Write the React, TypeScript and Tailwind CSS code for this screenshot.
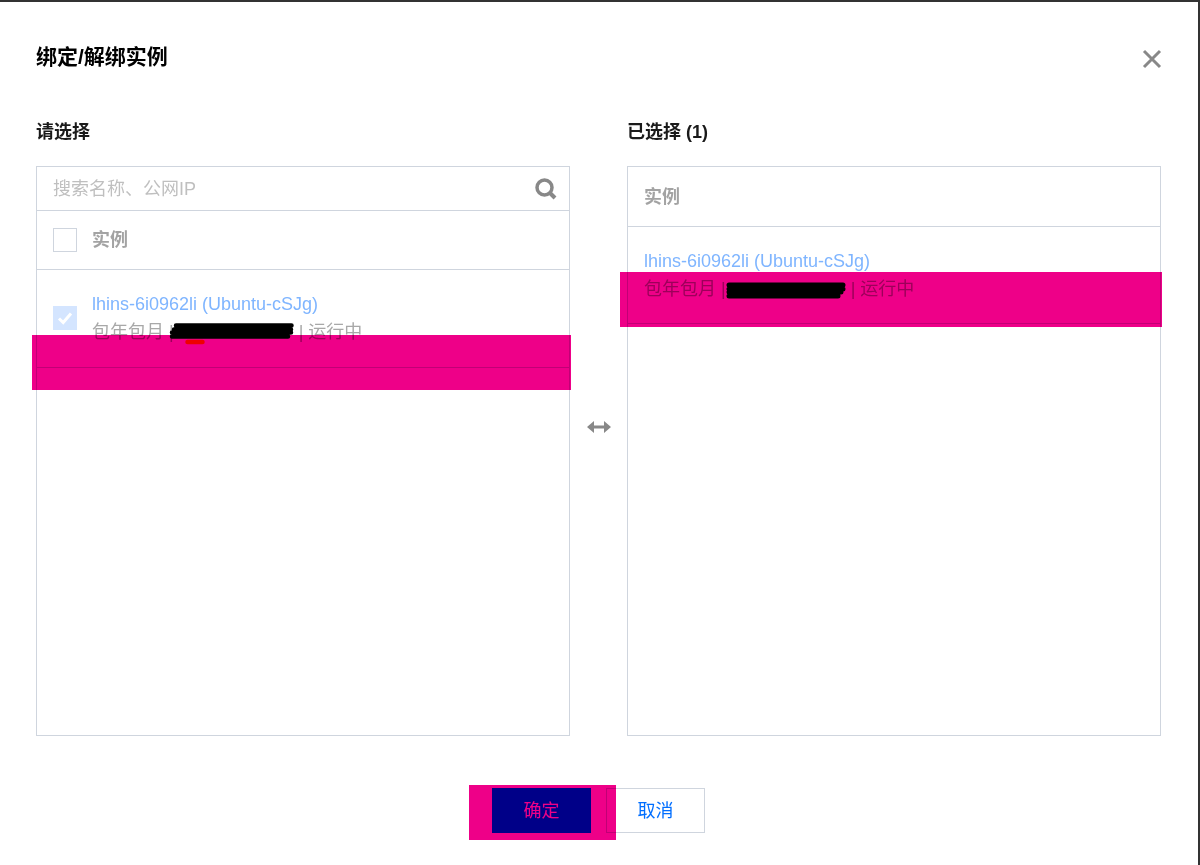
import React from "react";

const fontStack = "font-['Liberation_Sans','Noto_Sans_CJK_SC',sans-serif]";

const CheckBox = ({ checked }: { checked?: boolean }) =>
    checked ? (
        <span className="mb-[2px] flex h-6 w-6 shrink-0 items-center justify-center bg-[#d4e5ff]">
            <svg width="16" height="14" viewBox="0 0 16 14" fill="none">
                <path d="M2 7.5L6.2 11.5L14 2.5" stroke="#ffffff" strokeWidth="3" />
            </svg>
        </span>
    ) : (
        <span className="h-6 w-6 shrink-0 border border-[#cfd5de] bg-white" />
    );

const LeftScribble = () => (
    <svg className="absolute top-[5px] left-[77px]" width="128" height="27" viewBox="0 0 128 27" fill="none">
        <path d="M7 2.5H122.500M122 6.500H5M122 9.500H3M3 13.500H119" stroke="#000000" strokeWidth="4.5" strokeLinecap="round" />
        <path d="M18.500 19H33.500" stroke="#ff0000" strokeWidth="4.500" strokeLinecap="round" />
    </svg>
);

const RightScribble = () => (
    <svg className="absolute top-[6px] left-[81px]" width="124" height="20" viewBox="0 0 124 20" fill="none">
        <path d="M4 4H118M118 8H4M116 11H4M4 15H113" stroke="#000000" strokeWidth="5" strokeLinecap="round" />
    </svg>
);

const InstanceInfo = ({ scribble }: { scribble: React.ReactNode }) => (
    <div className="flex flex-col pb-[1px]">
        <span className="text-[18px] leading-[26px] text-[#7fb5ff]">lhins-6i0962li (Ubuntu-cSJg)</span>
        <span className="relative mt-[1px] text-[18px] leading-[28px] whitespace-nowrap text-[#a8a8a8]">
            包年包月 | <span className="inline-block w-[115px]" /> | 运行中
            {scribble}
        </span>
    </div>
);

const HeaderLabel = () => <span className="pt-[1px] text-[18px] font-bold text-[#a3a3a3]">实例</span>;

export default function App() {
    return (
        <div className={`relative h-[865px] w-[1200px] overflow-hidden border-t-2 border-r-2 border-[#333333] bg-white ${fontStack}`}>
            <div className="flex items-center justify-between pt-[41px] pr-9 pl-9">
                <h2 className="text-[21px] leading-[28px] font-bold text-black">绑定/解绑实例</h2>
                <svg className="mt-[3px]" width="20" height="20" viewBox="0 0 20 20" fill="none">
                    <path d="M2 2L18 18M18 2L2 18" stroke="#888888" strokeWidth="3" />
                </svg>
            </div>

            <div className="mt-[49px] flex px-9">
                <div className="w-[534px]">
                    <h3 className="text-[18px] leading-6 font-bold text-[#1a1a1a]">请选择</h3>
                    <div className="mt-[22px] h-[570px] border border-[#cfd5de]">
                        <div className="flex h-11 items-center justify-between border-b border-[#cfd5de] pr-[12px] pl-4">
                            <span className="pt-[1px] text-[18px] text-[#bfbfbf]">搜索名称、公网IP</span>
                            <svg width="22" height="22" viewBox="0 0 22 22" fill="none">
                                <circle cx="9.5" cy="9.5" r="7.5" stroke="#888888" strokeWidth="3.5" />
                                <path d="M15 15L20 20" stroke="#888888" strokeWidth="4" />
                            </svg>
                        </div>
                        <div className="flex h-[59px] items-center gap-[15px] border-b border-[#cfd5de] pl-4">
                            <CheckBox />
                            <HeaderLabel />
                        </div>
                        <div className="flex h-[98px] items-center gap-[15px] border-b border-[#cfd5de] pl-4">
                            <CheckBox checked />
                            <InstanceInfo scribble={<LeftScribble />} />
                        </div>
                    </div>
                </div>

                <div className="flex w-[57px] items-center justify-center pb-[2px]">
                    <svg width="24" height="12" viewBox="0 0 24 12" fill="#888888">
                        <path d="M0 6L7 0V4.5H17V0L24 6L17 12V7.5H7V12Z" />
                    </svg>
                </div>

                <div className="w-[534px]">
                    <h3 className="text-[18px] leading-6 font-bold text-[#1a1a1a]">已选择 (1)</h3>
                    <div className="mt-[22px] h-[570px] border border-[#cfd5de]">
                        <div className="flex h-[60px] items-center border-b border-[#cfd5de] pl-4">
                            <HeaderLabel />
                        </div>
                        <div className="flex h-[97px] items-center border-b border-[#cfd5de] pt-[2px] pl-4">
                            <InstanceInfo scribble={<RightScribble />} />
                        </div>
                    </div>
                </div>
            </div>

            <div className="mt-[52px] flex justify-center gap-[15px] pr-[1px]">
                <button className="h-[45px] w-[99px] bg-[#006eff] pt-[1px] text-[18px] text-white">确定</button>
                <button className="h-[45px] w-[99px] border border-[#cfd5de] bg-white pt-[1px] text-[18px] text-[#006eff]">取消</button>
            </div>

            {/* redaction blocks that sit on top of the finished dialog */}
            <div className="absolute top-[333px] left-8 h-[55px] w-[539px] bg-[#ee0088] mix-blend-multiply" />
            <div className="absolute top-[270px] left-[620px] h-[55px] w-[542px] bg-[#ee0088] mix-blend-multiply" />
            <div className="absolute top-[783px] left-[469px] h-[55px] w-[147px] bg-[#ee0088] mix-blend-multiply" />
        </div>
    );
}
